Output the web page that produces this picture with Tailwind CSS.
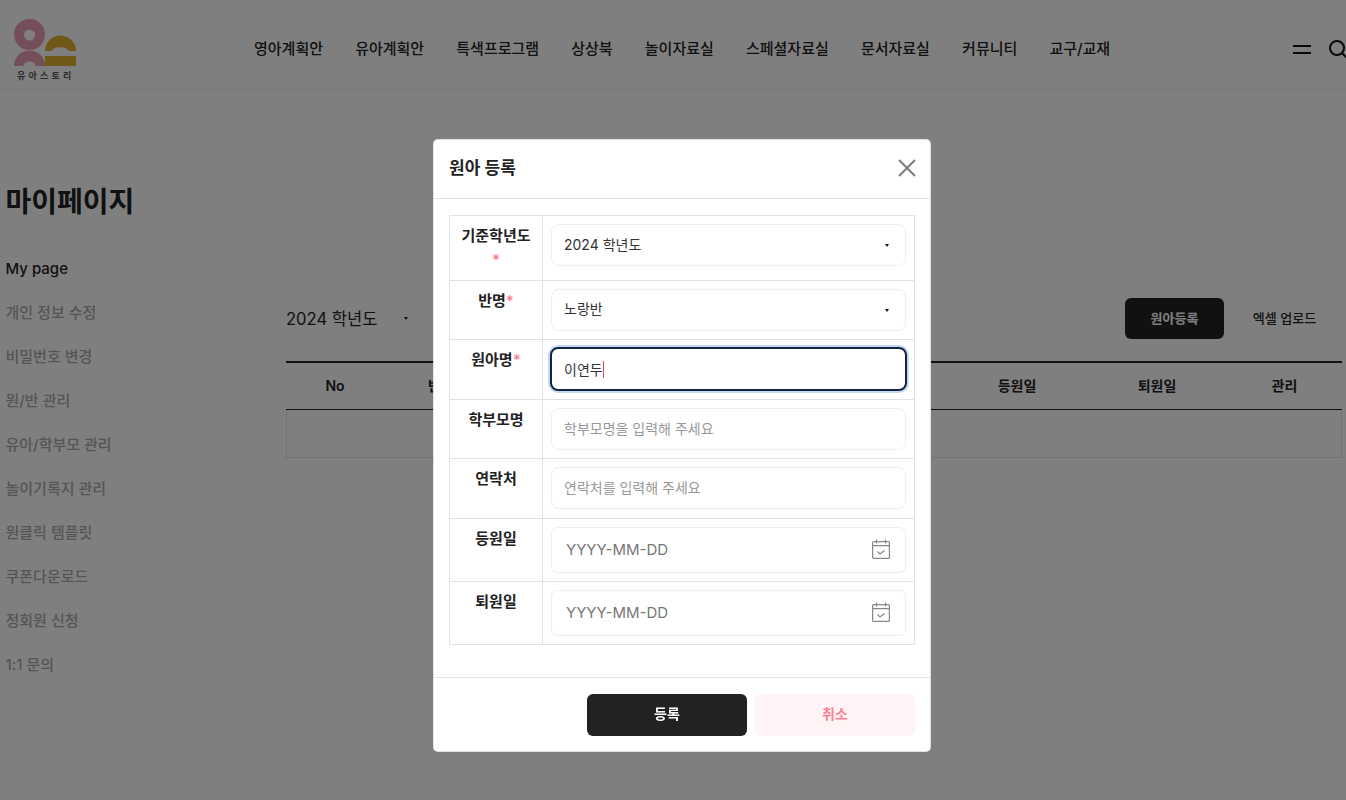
<!DOCTYPE html>
<html lang="ko">
<head>
    <meta charset="UTF-8">
    <meta name="viewport" content="width=device-width, initial-scale=1.0">
    <title>마이페이지</title>
    <script src="https://cdn.jsdelivr.net/npm/@tailwindcss/browser@4"></script>
</head>
<body class="h-[800px] overflow-hidden bg-white text-[#222] font-['Inter','Noto_Sans_CJK_KR',sans-serif]">
    <!-- Header -->
    <header class="flex items-center h-[90px] border-b border-[#eee] overflow-hidden">
        <div class="w-[254px] shrink-0 pl-[14px] pt-[19px] h-full">
            <svg width="62" height="47" viewBox="14 19 62 47" class="block">
                <path fill-rule="evenodd" fill="#e89cb0" d="M29.5 19a15.500 15.500 0 1 1 0 31a15.500 15.500 0 1 1 0-31zM29.5 29.500a5.500 5.500 0 1 0 0 11a5.500 5.500 0 1 0 0-11z"/>
                <path fill="#e89cb0" d="M14 66a15.500 15.500 0 0 1 31 0h-9.500a6 4.500 0 0 0-12 0z"/>
                <path fill="#e0b030" d="M45 51a15.500 15.500 0 0 1 31 0h-7a9 5 0 0 0-17.500 0z"/>
                <rect x="45" y="56" width="31" height="10" fill="#e0b030"/>
            </svg>
            <div class="text-[9px] leading-[12px] font-bold tracking-[3.2px] text-[#555] pl-[3px] mt-[4px] whitespace-nowrap">유아스토리</div>
        </div>
        <nav class="flex gap-[32.15px] text-[15px] font-medium whitespace-nowrap mt-[10px]">
            <a>영아계획안</a>
            <a>유아계획안</a>
            <a>특색프로그램</a>
            <a>상상북</a>
            <a>놀이자료실</a>
            <a>스페셜자료실</a>
            <a>문서자료실</a>
            <a>커뮤니티</a>
            <a>교구/교재</a>
        </nav>
        <div class="flex items-center gap-[18px] ml-auto -mr-[2px] shrink-0 mt-[10px]">
            <div class="w-[18px] h-[9px] border-y-2 border-[#111]"></div>
            <svg width="19" height="19" viewBox="0 0 19 19" fill="none" stroke="#111" stroke-width="2"><circle cx="8" cy="8" r="7"/><path d="M13 13l5 5"/></svg>
        </div>
    </header>

    <div class="flex">
        <!-- Sidebar -->
        <aside class="w-[286px] shrink-0 pl-[5.5px] pt-[92px]">
            <h1 class="text-[28px] leading-[40px] font-bold">마이페이지</h1>
            <ul class="mt-[25px] text-[15px] leading-[44px] font-medium text-[#aaa]">
                <li class="text-[#222]">My page</li>
                <li>개인 정보 수정</li>
                <li>비밀번호 변경</li>
                <li>원/반 관리</li>
                <li>유아/학부모 관리</li>
                <li>놀이기록지 관리</li>
                <li>원클릭 템플릿</li>
                <li>쿠폰다운로드</li>
                <li>정회원 신청</li>
                <li>1:1 문의</li>
            </ul>
        </aside>

        <!-- Content -->
        <main class="w-[1056px] shrink-0 pt-[208px]">
            <div class="flex items-center h-[41px]">
                <div class="w-[125px] flex items-center text-[16.6px] pt-[1px]">
                    <span class="w-[118px]">2024 학년도</span>
                    <span class="w-0 h-0 border-x-[2.5px] border-x-transparent border-t-[3px] border-t-[#222]"></span>
                </div>
                <button class="ml-auto w-[99px] h-[41px] rounded-md bg-[#222] text-white text-[13px] font-semibold">원아등록</button>
                <button class="w-[118px] h-[41px] pl-[3px] text-[13px] font-medium">엑셀 업로드</button>
            </div>
            <table class="w-full mt-[22px] table-fixed border-separate border-spacing-0 border-t-2 border-[#222] text-[14px]">
                <thead>
                    <tr class="h-[47px] [&>th]:pb-[2px] [&>th]:border-b [&>th]:border-[#222] [&>th]:font-semibold">
                        <th class="w-[98px]">No</th>
                        <th class="w-[114px]">반명</th>
                        <th>원아명</th>
                        <th>학부모명</th>
                        <th class="w-[140px]">등원일</th>
                        <th class="w-[140px]">퇴원일</th>
                        <th class="w-[115px]">관리</th>
                    </tr>
                </thead>
                <tbody>
                    <tr class="h-[48px]"><td colspan="7" class="border-x border-b border-[#e5e5e5]"></td></tr>
                </tbody>
            </table>
        </main>
    </div>

    <!-- Modal -->
    <div class="fixed inset-0 bg-black/50 pt-[139px] pl-[433px]">
        <div class="w-[498px] h-[613px] flex flex-col bg-white rounded-[5px] shadow-[inset_0_0_0_1px_rgba(0,0,0,0.12)]">
            <div class="flex items-center justify-between h-[60px] shrink-0 pl-4 pr-[14px] border-b border-[#dee2e6]">
                <h2 class="text-[17px] font-semibold">원아 등록</h2>
                <svg width="20" height="20" viewBox="0 0 20 20" fill="none" stroke="#777" stroke-width="1.800" class="-mt-[2px]"><path d="M2 2l16 16M18 2L2 18"/></svg>
            </div>
            <div class="flex-1 p-4">
                <table class="w-full table-fixed border-collapse text-[15px]">
                    <tbody>
                        <tr>
                            <th class="w-[93px] border border-[#dee2e6] p-2 align-top leading-[24px] font-semibold">기준학년도 <span class="text-[#ff7f90]">*</span></th>
                            <td class="border border-[#dee2e6] p-2 align-top">
                                <div class="flex items-center justify-between h-[42px] pl-3 pr-[16px] border border-[#eceef1] rounded-lg text-[14px] text-[#333]">
                                    <span class="pb-[2px]">2024 학년도</span>
                                    <span class="w-0 h-0 border-x-[2.5px] border-x-transparent border-t-[3px] border-t-[#111]"></span>
                                </div>
                            </td>
                        </tr>
                        <tr>
                            <th class="border border-[#dee2e6] p-2 align-top leading-[24px] font-semibold">반명<span class="text-[#ff7f90]">*</span></th>
                            <td class="border border-[#dee2e6] p-2 align-top">
                                <div class="flex items-center justify-between h-[42px] pl-3 pr-[16px] border border-[#eceef1] rounded-lg text-[14px] text-[#333]">
                                    <span class="pb-[3px]">노랑반</span>
                                    <span class="w-0 h-0 border-x-[2.5px] border-x-transparent border-t-[3px] border-t-[#111]"></span>
                                </div>
                            </td>
                        </tr>
                        <tr>
                            <th class="border border-[#dee2e6] p-2 align-top leading-[24px] font-semibold">원아명<span class="text-[#ff7f90]">*</span></th>
                            <td class="border border-[#dee2e6] pt-2 px-2 pb-[9px] align-top">
                                <div class="flex items-center h-[44px] -m-px pl-3 border-2 border-[#14233c] rounded-lg text-[14px] text-[#333] shadow-[0_0_0_2px_#c5d9f7]">
                                    <span>이연두</span><span class="inline-block w-px h-[17px] bg-[#e8485f]"></span>
                                </div>
                            </td>
                        </tr>
                        <tr>
                            <th class="border border-[#dee2e6] p-2 align-top leading-[24px] font-semibold">학부모명</th>
                            <td class="border border-[#dee2e6] p-2 align-top">
                                <input type="text" placeholder="학부모명을 입력해 주세요" class="block w-full h-[42px] px-3 pb-[2px] border border-[#eceef1] rounded-lg text-[14px] placeholder:text-[#999]">
                            </td>
                        </tr>
                        <tr>
                            <th class="border border-[#dee2e6] p-2 align-top leading-[24px] font-semibold">연락처</th>
                            <td class="border border-[#dee2e6] pt-2 px-2 pb-[9px] align-top">
                                <input type="text" placeholder="연락처를 입력해 주세요" class="block w-full h-[42px] px-3 pb-[2px] border border-[#eceef1] rounded-lg text-[14px] placeholder:text-[#999]">
                            </td>
                        </tr>
                        <tr>
                            <th class="border border-[#dee2e6] p-2 align-top leading-[24px] font-semibold">등원일</th>
                            <td class="border border-[#dee2e6] p-2 align-top">
                                <div class="flex items-center justify-between h-[46px] pl-[14px] pr-[15px] border border-[#eceef1] rounded-md text-[15px] text-[#777]">
                                    <span>YYYY-MM-DD</span>
                                    <svg width="18" height="20" viewBox="0 0 18 20" fill="none" stroke="#888" stroke-width="1.200" class="-mt-[2px]"><rect x="0.600" y="2.600" width="16.800" height="16.800" rx="1"/><path d="M0.600 6.600h16.800M4.500 0.500v4M13.500 0.500v4"/><path d="M5.500 12.500l2.500 2.500l4.500-3.500"/></svg>
                                </div>
                            </td>
                        </tr>
                        <tr>
                            <th class="border border-[#dee2e6] p-2 align-top leading-[24px] font-semibold">퇴원일</th>
                            <td class="border border-[#dee2e6] p-2 align-top">
                                <div class="flex items-center justify-between h-[46px] pl-[14px] pr-[15px] border border-[#eceef1] rounded-md text-[15px] text-[#777]">
                                    <span>YYYY-MM-DD</span>
                                    <svg width="18" height="20" viewBox="0 0 18 20" fill="none" stroke="#888" stroke-width="1.200" class="-mt-[2px]"><rect x="0.600" y="2.600" width="16.800" height="16.800" rx="1"/><path d="M0.600 6.600h16.800M4.500 0.500v4M13.500 0.500v4"/><path d="M5.500 12.500l2.500 2.500l4.500-3.500"/></svg>
                                </div>
                            </td>
                        </tr>
                    </tbody>
                </table>
            </div>
            <div class="flex justify-end gap-2 h-[75px] shrink-0 pt-4 pr-4 border-t border-[#dee2e6]">
                <button class="w-[160px] h-[42px] pb-[3px] rounded-md bg-[#222] text-white text-[14px] font-semibold">등록</button>
                <button class="w-[160px] h-[42px] pb-[3px] rounded-md bg-[#fff3f5] text-[#ff7f90] text-[14px] font-semibold">취소</button>
            </div>
        </div>
    </div>
</body>
</html>
